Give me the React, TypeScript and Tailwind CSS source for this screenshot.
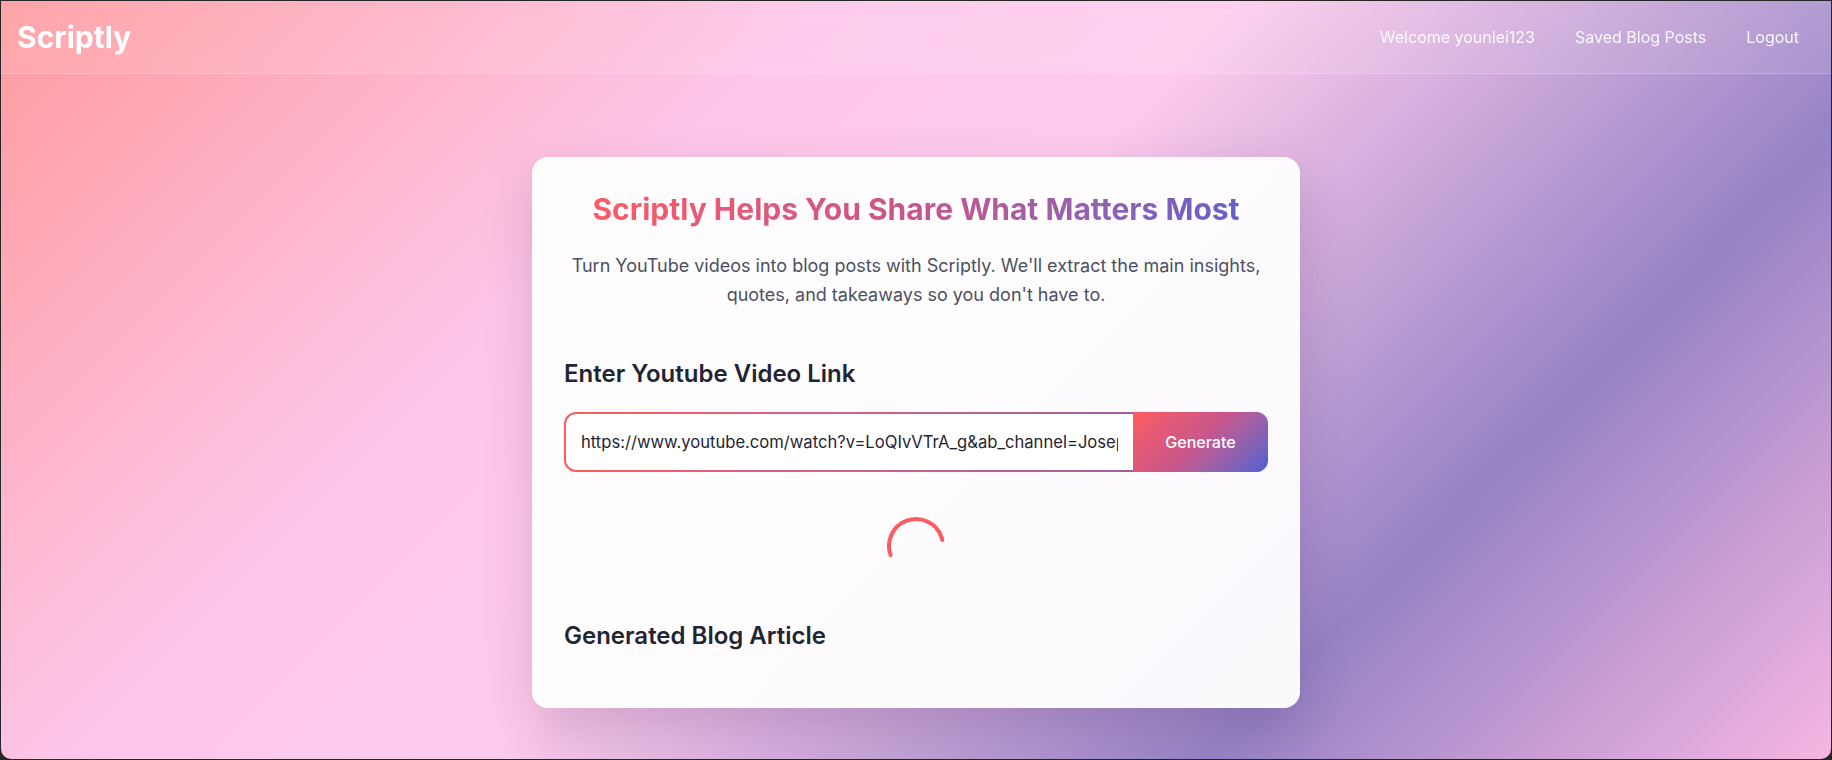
import { useState } from "react";

function Spinner() {
  return (
    <svg width="64" height="64" viewBox="0 0 64 64" className="block">
      <circle
        cx="32"
        cy="32"
        r="27"
        fill="none"
        stroke="#ff5a5f"
        strokeWidth="4"
        strokeLinecap="round"
        strokeDasharray="88 200"
        transform="rotate(160 32 32)"
      />
    </svg>
  );
}

export default function App() {
  const [url, setUrl] = useState(
    "https://www.youtube.com/watch?v=LoQIvVTrA_g&ab_channel=JosephCarlson"
  );

  return (
    <div className="h-[760px] w-full bg-[#262626] p-px font-['Inter','Noto_Sans',sans-serif]">
      <div className="flex h-full flex-col overflow-hidden rounded-b-[10px] bg-[linear-gradient(135deg,#ff9a9e_0%,#fdc7ea_32%,#fecbec_48%,#9683c6_76%,#f6b6e2_100%)]">
        <nav className="flex h-[73px] shrink-0 items-center justify-between border-b border-white/20 bg-white/10 px-4 backdrop-blur">
          <span className="text-[30px] font-bold text-white">Scriptly</span>
          <div className="flex items-center gap-2 text-base text-white/90">
            <span className="px-4 py-2">Welcome younlei123</span>
            <a className="px-4 py-2">Saved Blog Posts</a>
            <a className="px-4 py-2">Logout</a>
          </div>
        </nav>

        <main className="flex flex-1 justify-center pt-[83px]">
          <div className="h-[551px] w-[768px] rounded-2xl bg-white/95 px-8 pt-[34px] shadow-[0_20px_50px_rgba(60,20,80,0.18)]">
            <h1 className="bg-linear-to-r from-[#ff5a5f] via-[#c6568c] to-[#5a5fcf] bg-clip-text text-center text-3xl font-bold text-transparent">
              Scriptly Helps You Share What Matters Most
            </h1>
            <p className="mx-auto mt-[24px] max-w-[700px] text-center text-lg leading-[29px] text-[#4b5161]">
              Turn YouTube videos into blog posts with Scriptly. We'll extract the main insights, quotes, and takeaways so you don't have to.
            </p>

            <h2 className="mt-[49px] text-2xl font-semibold text-[#1f2533]">Enter Youtube Video Link</h2>
            <div className="mt-[22px] flex h-[60px] rounded-xl bg-linear-to-r from-[#ff5a5f] to-[#8a5cb0] p-[2px]">
              <input
                value={url}
                onChange={(e) => setUrl(e.target.value)}
                className="min-w-0 flex-1 rounded-l-[10px] bg-white px-[15px] text-[16.6px] text-[#1f2533] outline-none"
              />
              <button className="w-[135px] -my-[2px] -mr-[2px] rounded-r-xl bg-linear-135 from-[#ff5a5f] via-[#c7568c] to-[#4a5fd3] text-base font-medium text-white">
                Generate
              </button>
            </div>

            <div className="mt-[42px] flex justify-center">
              <Spinner />
            </div>

            <h2 className="mt-[42px] text-2xl font-semibold text-[#1f2533]">Generated Blog Article</h2>
          </div>
        </main>
      </div>
    </div>
  );
}
